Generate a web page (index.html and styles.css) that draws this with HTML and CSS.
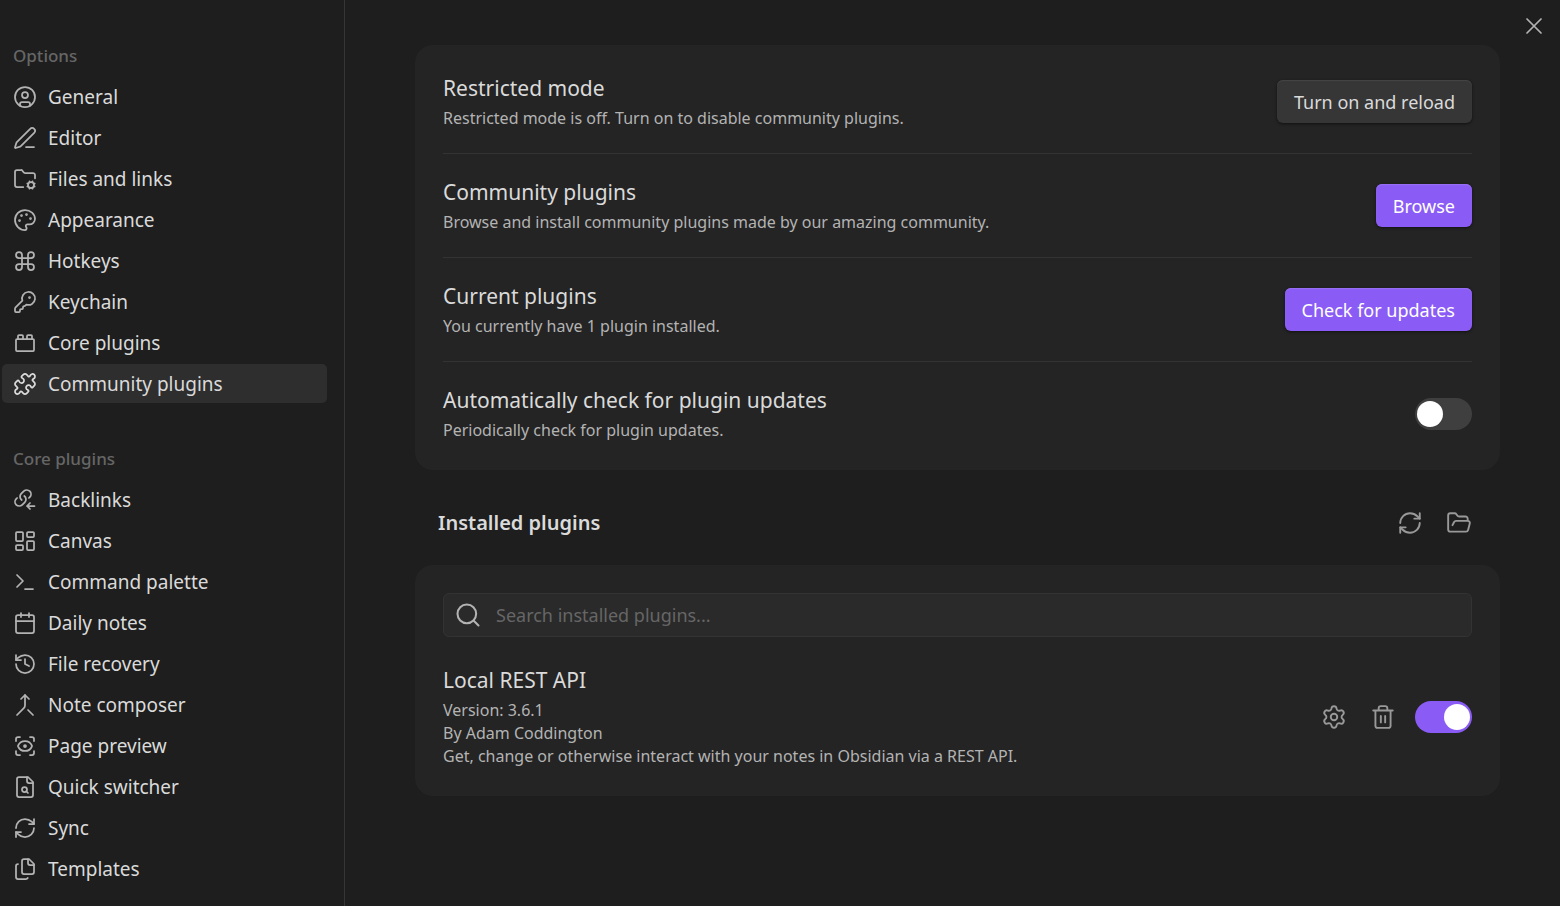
FILE: index.html
```html
<!DOCTYPE html>
<html lang="en">
<head>
  <meta charset="UTF-8" />
  <meta name="viewport" content="width=device-width, initial-scale=1" />
  <title>Settings - Community plugins</title>
  <link rel="stylesheet" href="styles.css">
</head>
<body>
  <aside class="sidebar">
    <nav class="nav-group">
      <h2 class="nav-title">Options</h2>
      <a class="nav-item" href="#"><svg class="icon" viewBox="0 0 24 24"><circle cx="12" cy="12" r="10"/><circle cx="12" cy="10" r="3"/><path d="M7 20.662V19a2 2 0 0 1 2-2h6a2 2 0 0 1 2 2v1.662"/></svg>General</a>
      <a class="nav-item" href="#"><svg class="icon" viewBox="0 0 24 24"><path d="M13 21h8"/><path d="M21.174 6.812a1 1 0 0 0-3.986-3.987L3.842 16.174a2 2 0 0 0-.5.83l-1.321 4.352a.5.5 0 0 0 .623.622l4.353-1.32a2 2 0 0 0 .83-.497z"/></svg>Editor</a>
      <a class="nav-item" href="#"><svg class="icon" viewBox="0 0 24 24"><path d="M10.3 20H4a2 2 0 0 1-2-2V5a2 2 0 0 1 2-2h3.9a2 2 0 0 1 1.69.9l.81 1.2a2 2 0 0 0 1.67.9H20a2 2 0 0 1 2 2v3.3"/><circle cx="18" cy="18" r="3"/><path d="m14.305 19.53.923-.382M15.228 16.852l-.923-.383M16.852 15.228l-.383-.923M16.852 20.772l-.383.924M19.148 15.228l.383-.923M19.53 21.696l-.382-.924M20.772 16.852l.924-.383M20.772 19.148l.924.383"/></svg>Files and links</a>
      <a class="nav-item" href="#"><svg class="icon" viewBox="0 0 24 24"><path d="M12 2C6.5 2 2 6.5 2 12s4.5 10 10 10c.926 0 1.648-.746 1.648-1.688 0-.437-.18-.835-.437-1.125-.29-.289-.438-.652-.438-1.125a1.64 1.64 0 0 1 1.668-1.668h1.996c3.051 0 5.555-2.503 5.555-5.554C21.965 6.012 17.461 2 12 2z"/><circle class="dot" cx="13.5" cy="6.5" r=".5"/><circle class="dot" cx="17.5" cy="10.5" r=".5"/><circle class="dot" cx="6.5" cy="12.5" r=".5"/><circle class="dot" cx="8.5" cy="7.5" r=".5"/></svg>Appearance</a>
      <a class="nav-item" href="#"><svg class="icon" viewBox="0 0 24 24"><path d="M15 6v12a3 3 0 1 0 3-3H6a3 3 0 1 0 3 3V6a3 3 0 1 0-3 3h12a3 3 0 1 0-3-3"/></svg>Hotkeys</a>
      <a class="nav-item" href="#"><svg class="icon" viewBox="0 0 24 24"><path d="M2.586 17.414A2 2 0 0 0 2 18.828V21a1 1 0 0 0 1 1h3a1 1 0 0 0 1-1v-1a1 1 0 0 1 1-1h1a1 1 0 0 0 1-1v-1a1 1 0 0 1 1-1h.172a2 2 0 0 0 1.414-.586l.814-.814a6.5 6.5 0 1 0-4-4z"/><circle class="dot" cx="16.5" cy="7.5" r=".5"/></svg>Keychain</a>
      <a class="nav-item" href="#"><svg class="icon" viewBox="0 0 24 24"><rect x="3" y="8" width="18" height="12" rx="1"/><path d="M10 8V5c0-.6-.4-1-1-1H6a1 1 0 0 0-1 1v3M19 8V5c0-.6-.4-1-1-1h-3a1 1 0 0 0-1 1v3"/></svg>Core plugins</a>
      <a class="nav-item active" href="#" aria-current="page"><svg class="icon" viewBox="0 0 24 24"><path d="M19.439 7.85c-.049.322.059.648.289.878l1.568 1.568c.47.47.706 1.087.706 1.704s-.235 1.233-.706 1.704l-1.611 1.611a.98.98 0 0 1-.837.276c-.47-.07-.802-.48-.968-.925a2.501 2.501 0 1 0-3.214 3.214c.446.166.855.497.925.968a.979.979 0 0 1-.276.837l-1.61 1.61a2.404 2.404 0 0 1-1.705.707 2.402 2.402 0 0 1-1.704-.706l-1.568-1.568a1.026 1.026 0 0 0-.877-.29c-.493.074-.84.504-1.02.968a2.5 2.5 0 1 1-3.237-3.237c.464-.18.894-.527.967-1.02a1.026 1.026 0 0 0-.289-.877l-1.568-1.568A2.402 2.402 0 0 1 1.998 12c0-.617.236-1.234.706-1.704L4.23 8.77c.24-.24.581-.353.917-.303.515.077.877.528 1.073 1.01a2.5 2.5 0 1 0 3.259-3.259c-.482-.196-.933-.558-1.01-1.073-.05-.336.062-.676.303-.917l1.525-1.525A2.402 2.402 0 0 1 12 1.998c.617 0 1.234.236 1.704.706l1.568 1.568c.23.23.556.338.877.29.493-.074.84-.504 1.02-.968a2.5 2.5 0 1 1 3.237 3.237c-.464.18-.894.527-.967 1.02Z"/></svg>Community plugins</a>
    </nav>
    <nav class="nav-group">
      <h2 class="nav-title">Core plugins</h2>
      <a class="nav-item" href="#"><svg class="icon" viewBox="0 0 24 24"><path d="M8.7 12a4.2 4.2 0 0 1-.46-6.31l2.56-2.51a4.3 4.3 0 0 1 5.96.05 4.15 4.15 0 0 1 .05 5.86l-.91.91"/><path d="M11.3 8a4.2 4.2 0 0 1 .46 6.31L9.2 16.82a4.3 4.3 0 0 1-5.96-.05 4.15 4.15 0 0 1-.05-5.86L4.1 10"/><path d="m17 21-3-3 3-3M21.5 18H14"/></svg>Backlinks</a>
      <a class="nav-item" href="#"><svg class="icon" viewBox="0 0 24 24"><rect x="3" y="3" width="7" height="9" rx="1"/><rect x="14" y="3" width="7" height="5" rx="1"/><rect x="14" y="12" width="7" height="9" rx="1"/><rect x="3" y="16" width="7" height="5" rx="1"/></svg>Canvas</a>
      <a class="nav-item" href="#"><svg class="icon" viewBox="0 0 24 24"><path d="m4 17 6-6-6-6M12 19h8"/></svg>Command palette</a>
      <a class="nav-item" href="#"><svg class="icon" viewBox="0 0 24 24"><path d="M8 2v4M16 2v4M3 10h18"/><rect x="3" y="4" width="18" height="18" rx="2"/></svg>Daily notes</a>
      <a class="nav-item" href="#"><svg class="icon" viewBox="0 0 24 24"><path d="M3 12a9 9 0 1 0 9-9 9.75 9.75 0 0 0-6.74 2.74L3 8"/><path d="M3 3v5h5M12 7v5l4 2"/></svg>File recovery</a>
      <a class="nav-item" href="#"><svg class="icon" viewBox="0 0 24 24"><path d="m8 6 4-4 4 4"/><path d="M12 2v10.3a4 4 0 0 1-1.172 2.872L4 22M20 22l-5-5"/></svg>Note composer</a>
      <a class="nav-item" href="#"><svg class="icon" viewBox="0 0 24 24"><path d="M3 7V5a2 2 0 0 1 2-2h2M17 3h2a2 2 0 0 1 2 2v2M21 17v2a2 2 0 0 1-2 2h-2M7 21H5a2 2 0 0 1-2-2v-2"/><circle class="dot" cx="12" cy="12" r="1"/><path d="M18.944 12.33a1 1 0 0 0 0-.66 7.5 7.5 0 0 0-13.888 0 1 1 0 0 0 0 .66 7.5 7.5 0 0 0 13.888 0"/></svg>Page preview</a>
      <a class="nav-item" href="#"><svg class="icon" viewBox="0 0 24 24"><path d="M15 2H6a2 2 0 0 0-2 2v16a2 2 0 0 0 2 2h12a2 2 0 0 0 2-2V7z"/><path d="M14 2v4a2 2 0 0 0 2 2h4"/><circle cx="11.5" cy="14.5" r="2.5"/><path d="M13.3 16.3 15 18"/></svg>Quick switcher</a>
      <a class="nav-item" href="#"><svg class="icon" viewBox="0 0 24 24"><path d="M3 12a9 9 0 0 1 9-9 9.75 9.75 0 0 1 6.74 2.74L21 8"/><path d="M21 3v5h-5M21 12a9 9 0 0 1-9 9 9.75 9.75 0 0 1-6.74-2.74L3 16"/><path d="M8 16H3v5"/></svg>Sync</a>
      <a class="nav-item" href="#"><svg class="icon" viewBox="0 0 24 24"><path d="M16 2h-5a2 2 0 0 0-2 2v11a2 2 0 0 0 2 2h8a2 2 0 0 0 2-2V7z"/><path d="M15 2v4a2 2 0 0 0 2 2h4M5 7a2 2 0 0 0-2 2v11a2 2 0 0 0 2 2h8a2 2 0 0 0 1.732-1"/></svg>Templates</a>
    </nav>
  </aside>

  <main class="content">
    <button class="close-button" aria-label="Close"><svg class="icon" viewBox="0 0 24 24"><path d="M18 6 6 18M6 6l12 12"/></svg></button>

    <section class="card">
      <div class="setting">
        <div class="setting-info">
          <h3 class="setting-name">Restricted mode</h3>
          <p class="setting-desc">Restricted mode is off. Turn on to disable community plugins.</p>
        </div>
        <button class="btn">Turn on and reload</button>
      </div>
      <div class="setting">
        <div class="setting-info">
          <h3 class="setting-name">Community plugins</h3>
          <p class="setting-desc">Browse and install community plugins made by our amazing community.</p>
        </div>
        <button class="btn btn-cta">Browse</button>
      </div>
      <div class="setting">
        <div class="setting-info">
          <h3 class="setting-name">Current plugins</h3>
          <p class="setting-desc">You currently have 1 plugin installed.</p>
        </div>
        <button class="btn btn-cta">Check for updates</button>
      </div>
      <div class="setting">
        <div class="setting-info">
          <h3 class="setting-name"><label for="auto-update">Automatically check for plugin updates</label></h3>
          <p class="setting-desc">Periodically check for plugin updates.</p>
        </div>
        <input type="checkbox" class="toggle" id="auto-update">
      </div>
    </section>

    <div class="section-heading">
      <h2>Installed plugins</h2>
      <div class="actions">
        <button class="icon-button" aria-label="Reload plugins"><svg class="icon" viewBox="0 0 24 24"><path d="M3 12a9 9 0 0 1 9-9 9.75 9.75 0 0 1 6.74 2.74L21 8"/><path d="M21 3v5h-5M21 12a9 9 0 0 1-9 9 9.75 9.75 0 0 1-6.74-2.74L3 16"/><path d="M8 16H3v5"/></svg></button>
        <button class="icon-button" aria-label="Open plugins folder"><svg class="icon" viewBox="0 0 24 24"><path d="m6 14 1.5-2.9A2 2 0 0 1 9.24 10H20a2 2 0 0 1 1.94 2.5l-1.54 6a2 2 0 0 1-1.95 1.5H4a2 2 0 0 1-2-2V5a2 2 0 0 1 2-2h3.9a2 2 0 0 1 1.69.9l.81 1.2a2 2 0 0 0 1.67.9H18a2 2 0 0 1 2 2v2"/></svg></button>
      </div>
    </div>

    <section class="card">
      <div class="search">
        <svg class="icon" viewBox="0 0 24 24"><circle cx="11" cy="11" r="8"/><path d="m21 21-4.3-4.3"/></svg>
        <input type="search" placeholder="Search installed plugins..." aria-label="Search installed plugins">
      </div>
      <div class="setting plugin">
        <div class="setting-info">
          <h3 class="setting-name"><label for="rest-api">Local REST API</label></h3>
          <p class="setting-desc">Version: 3.6.1</p>
          <p class="setting-desc">By Adam Coddington</p>
          <p class="setting-desc">Get, change or otherwise interact with your notes in Obsidian via a REST API.</p>
        </div>
        <div class="actions">
          <button class="icon-button" aria-label="Options"><svg class="icon" viewBox="0 0 24 24"><path d="M9.671 4.136a2.34 2.34 0 0 1 4.659 0 2.34 2.34 0 0 0 3.319 1.915 2.34 2.34 0 0 1 2.33 4.033 2.34 2.34 0 0 0 0 3.831 2.34 2.34 0 0 1-2.33 4.033 2.34 2.34 0 0 0-3.319 1.915 2.34 2.34 0 0 1-4.659 0 2.34 2.34 0 0 0-3.32-1.915 2.34 2.34 0 0 1-2.33-4.033 2.34 2.34 0 0 0 0-3.831A2.34 2.34 0 0 1 6.35 6.051a2.34 2.34 0 0 0 3.319-1.915"/><circle cx="12" cy="12" r="3"/></svg></button>
          <button class="icon-button" aria-label="Uninstall"><svg class="icon" viewBox="0 0 24 24"><path d="M3 6h18M19 6v14a2 2 0 0 1-2 2H7a2 2 0 0 1-2-2V6M8 6V4a2 2 0 0 1 2-2h4a2 2 0 0 1 2 2v2M10 11v6M14 11v6"/></svg></button>
          <input type="checkbox" class="toggle" id="rest-api" checked>
        </div>
      </div>
    </section>
  </main>
</body>
</html>
```

FILE: styles.css
```css
* {
  margin: 0;
  padding: 0;
  box-sizing: border-box;
}

body {
  display: flex;
  min-height: 100vh;
  background: #1e1e1e;
  color: #dadada;
  font-family: "Segoe UI", "Noto Sans", "Open Sans", sans-serif;
  font-size: 19px;
}

button,
input {
  font: inherit;
  font-size: 18px;
  color: inherit;
}

button {
  border: none;
  background: none;
  cursor: pointer;
}

.icon {
  flex: none;
  width: 24px;
  height: 24px;
  fill: none;
  stroke: currentColor;
  stroke-width: 1.75;
  stroke-linecap: round;
  stroke-linejoin: round;
}

.icon .dot {
  fill: currentColor;
}

/* Sidebar */
.sidebar {
  flex: none;
  width: 345px;
  padding: 37px 17px 0 2px;
  border-right: 1px solid #363636;
}

.nav-group {
  display: flex;
  flex-direction: column;
  gap: 2px;
  margin-bottom: 37px;
}

.nav-title {
  padding: 0 11px;
  color: #666;
  font-size: 17px;
  font-weight: 500;
  line-height: 38px;
}

.nav-item {
  display: flex;
  align-items: center;
  gap: 11px;
  height: 39px;
  padding: 0 11px;
  border-radius: 5px;
  color: #dadada;
  text-decoration: none;
}

.nav-item .icon {
  color: #b3b3b3;
}

.nav-item.active {
  background: #2e2e2e;
}

.nav-item.active .icon {
  color: #dadada;
}

/* Content */
.content {
  position: relative;
  flex: 1;
  padding: 45px 60px 45px 70px;
}

.close-button {
  position: absolute;
  top: 12px;
  right: 12px;
  display: flex;
  color: #b3b3b3;
}

.close-button .icon {
  width: 28px;
  height: 28px;
  stroke-width: 1.5;
}

.card {
  padding: 28px;
  border-radius: 18px;
  background: #242424;
}

.setting {
  display: flex;
  align-items: center;
  justify-content: space-between;
  gap: 20px;
}

.setting + .setting {
  margin-top: 23px;
  padding-top: 23px;
  border-top: 1px solid #333;
}

.setting-name {
  margin-bottom: 4px;
  font-size: 21px;
  font-weight: 400;
  line-height: 30px;
}

.setting-desc {
  color: #b3b3b3;
  font-size: 16px;
  line-height: 23px;
}

.btn {
  height: 43px;
  padding: 0 17px;
  border-radius: 6px;
  background: #363636;
  box-shadow: inset 0 1px 1px #454545, 0 1px 3px #111;
}

.btn-cta {
  background: #8a5cf5;
  box-shadow: inset 0 1px 1px #986ff6, 0 1px 3px #111;
  color: #fff;
}

.toggle {
  appearance: none;
  display: flex;
  flex: none;
  width: 57px;
  height: 32px;
  padding: 3px 2px;
  border-radius: 16px;
  background: #3f3f3f;
  cursor: pointer;
}

.toggle::before {
  content: "";
  width: 26px;
  height: 26px;
  border-radius: 50%;
  background: #fff;
}

.toggle:checked {
  justify-content: flex-end;
  background: #8a5cf5;
}

.section-heading {
  display: flex;
  align-items: center;
  justify-content: space-between;
  padding: 35px 24px 24px 23px;
}

.section-heading h2 {
  font-size: 20px;
  font-weight: 600;
  line-height: 36px;
}

.actions {
  display: flex;
  align-items: center;
  gap: 15px;
}

.icon-button {
  display: flex;
  padding: 0 4px;
  color: #999;
}

.icon-button .icon {
  width: 26px;
  height: 26px;
}

.search {
  display: flex;
  align-items: center;
  gap: 14px;
  height: 44px;
  padding: 0 10px;
  border: 1px solid #333;
  border-radius: 6px;
  background: #2a2a2a;
}

.search .icon {
  width: 28px;
  height: 28px;
  color: #b3b3b3;
}

.search input {
  flex: 1;
  border: none;
  outline: none;
  background: none;
}

.search input::placeholder {
  color: #666;
}

.plugin {
  margin-top: 28px;
}
```
